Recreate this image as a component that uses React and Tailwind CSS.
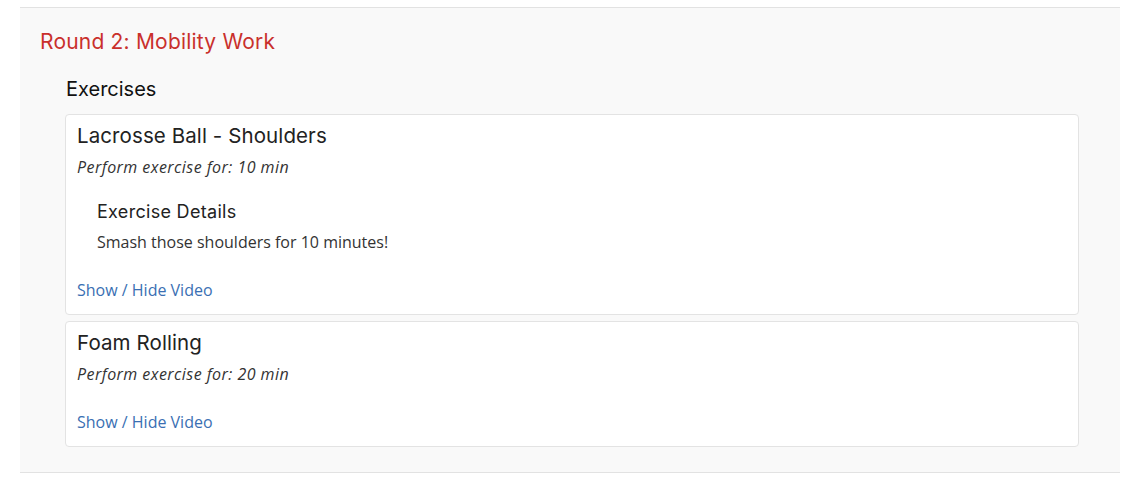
import React from 'react';

const exercises = [
  {
    name: 'Lacrosse Ball - Shoulders',
    duration: '10 min',
    details: 'Smash those shoulders for 10 minutes!',
  },
  {
    name: 'Foam Rolling',
    duration: '20 min',
  },
];

function ExerciseCard({ name, duration, details }) {
  return (
    <div className="rounded border border-[#e3e3e3] bg-white pl-[11px] pr-3 pt-[7px] pb-[13px] font-['Open_Sans',sans-serif]">
      <h4 className="font-['Inter',sans-serif] text-[20.5px] leading-[28px] tracking-[0.1px] text-[#222]">
        {name}
      </h4>
      <p className="mt-[6px] text-[16px] italic leading-[22px] tracking-[0.45px] text-[#333]">
        Perform exercise for: {duration}
      </p>
      {details ? (
        <div className="mt-[22px] pl-5">
          <h5 className="font-['Inter',sans-serif] text-[18px] leading-[24px] tracking-[0.3px] text-[#222]">
            Exercise Details
          </h5>
          <p className="mt-[7px] text-[16px] leading-[22px] text-[#333]">{details}</p>
        </div>
      ) : null}
      <a href="#" className="mt-[26px] block text-[16px] leading-[22px] text-[#3a6fb3]">
        Show / Hide Video
      </a>
    </div>
  );
}

export default function App() {
  return (
    <div className="min-h-screen bg-white pt-[7px]">
      <section className="ml-5 mr-[18px] border-y border-[#e2e2e2] bg-[#f9f9f9] pt-5 pb-[25px]">
        <h3 className="pl-5 font-['Inter',sans-serif] text-[21px] leading-[28px] tracking-[0.2px] text-[#c9302c]">
          Round 2: Mobility Work
        </h3>
        <div className="ml-[45px] mr-[41px] mt-[19px]">
          <h4 className="pl-px font-['Inter',sans-serif] text-[20px] leading-[28px] text-[#111]">
            Exercises
          </h4>
          <div className="mt-[11px] flex flex-col gap-[6px]">
            {exercises.map((ex) => (
              <ExerciseCard key={ex.name} {...ex} />
            ))}
          </div>
        </div>
      </section>
    </div>
  );
}
